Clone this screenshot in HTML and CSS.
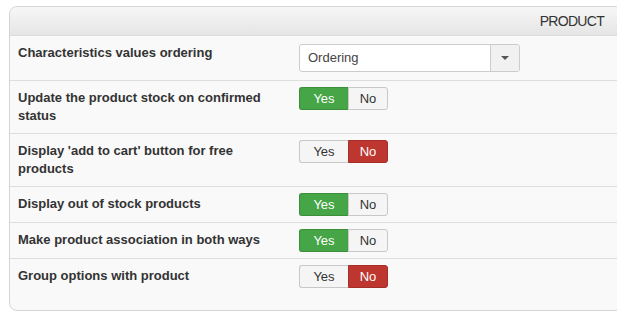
FILE: index.html
```html
<!DOCTYPE html>
<html lang="en">
<head>
    <meta charset="UTF-8">
    <meta name="viewport" content="width=device-width, initial-scale=1.0">
    <title>Product Options</title>
    <link rel="stylesheet" href="styles.css">
</head>
<body>

    <div class="panel">
        <div class="panel-head">PRODUCT</div>

        <div class="row">
            <div class="label">Characteristics values ordering</div>
            <div class="control">
                <div class="select">
                    <span class="select-value">Ordering</span>
                    <span class="select-caret"><span class="caret"></span></span>
                </div>
            </div>
        </div>

        <div class="row">
            <div class="label">Update the product stock on confirmed status</div>
            <div class="control">
                <div class="btn-group">
                    <span class="btn yes active">Yes</span><span class="btn no">No</span>
                </div>
            </div>
        </div>

        <div class="row">
            <div class="label">Display 'add to cart' button for free products</div>
            <div class="control">
                <div class="btn-group">
                    <span class="btn yes">Yes</span><span class="btn no active">No</span>
                </div>
            </div>
        </div>

        <div class="row">
            <div class="label">Display out of stock products</div>
            <div class="control">
                <div class="btn-group">
                    <span class="btn yes active">Yes</span><span class="btn no">No</span>
                </div>
            </div>
        </div>

        <div class="row">
            <div class="label">Make product association in both ways</div>
            <div class="control">
                <div class="btn-group">
                    <span class="btn yes active">Yes</span><span class="btn no">No</span>
                </div>
            </div>
        </div>

        <div class="row last">
            <div class="label">Group options with product</div>
            <div class="control">
                <div class="btn-group">
                    <span class="btn yes">Yes</span><span class="btn no active">No</span>
                </div>
            </div>
        </div>
    </div>

</body>
</html>
```

FILE: styles.css
```css
html, body {
    overflow: hidden;
}

body {
    font-family: "Liberation Sans", Arial, sans-serif;
    font-size: 13px;
    color: #333;
    background-color: #fff;
    margin: 0;
    padding: 6px 0 0 9px;
}

.panel {
    width: 612px;
    background-color: #f9f9f9;
    border: 1px solid #d4d4d4;
    border-radius: 8px;
    padding-bottom: 16px;
}

.panel-head {
    height: 28px;
    line-height: 28px;
    text-align: right;
    padding-right: 18px;
    font-size: 14px;
    letter-spacing: -0.7px;
    color: #333;
    background: linear-gradient(to bottom, #f7f7f7, #e5e5e5);
    border-bottom: 1px solid #dcdcdc;
    border-radius: 8px 8px 0 0;
}

.row {
    display: flex;
    align-items: flex-start;
    padding: 6px 8px;
    border-bottom: 1px solid #dedede;
}

.row.last {
    border-bottom: none;
}

.label {
    width: 270px;
    margin-right: 11px;
    padding: 2px 0;
    font-weight: bold;
    line-height: 18px;
}

.select {
    display: flex;
    width: 219px;
    height: 26px;
    margin: 2px 0;
    background-color: #fff;
    border: 1px solid #ccc;
    border-radius: 3px;
}

.select-value {
    flex: 1;
    line-height: 26px;
    padding-left: 8px;
    color: #444;
}

.select-caret {
    width: 28px;
    display: flex;
    align-items: center;
    justify-content: center;
    background-color: #f1f1f1;
    border-left: 1px solid #ccc;
    border-radius: 0 3px 3px 0;
}

.caret {
    width: 0;
    height: 0;
    border-left: 4px solid transparent;
    border-right: 4px solid transparent;
    border-top: 4px solid #555;
}

.btn-group {
    display: flex;
}

.btn {
    display: block;
    line-height: 15px;
    padding: 3px 0;
    text-align: center;
    font-size: 13px;
    color: #333;
    background-color: #f5f5f5;
    border: 1px solid #c8c8c8;
}

.btn.yes {
    width: 48px;
    border-radius: 3px 0 0 3px;
    border-right: none;
}

.btn.no {
    width: 38px;
    border-radius: 0 3px 3px 0;
}

.btn.yes.active {
    color: #fff;
    background-color: #46a546;
    border-color: #3b8f3b;
}

.btn.no.active {
    color: #fff;
    background-color: #bd362f;
    border-color: #a52e28;
}
```
